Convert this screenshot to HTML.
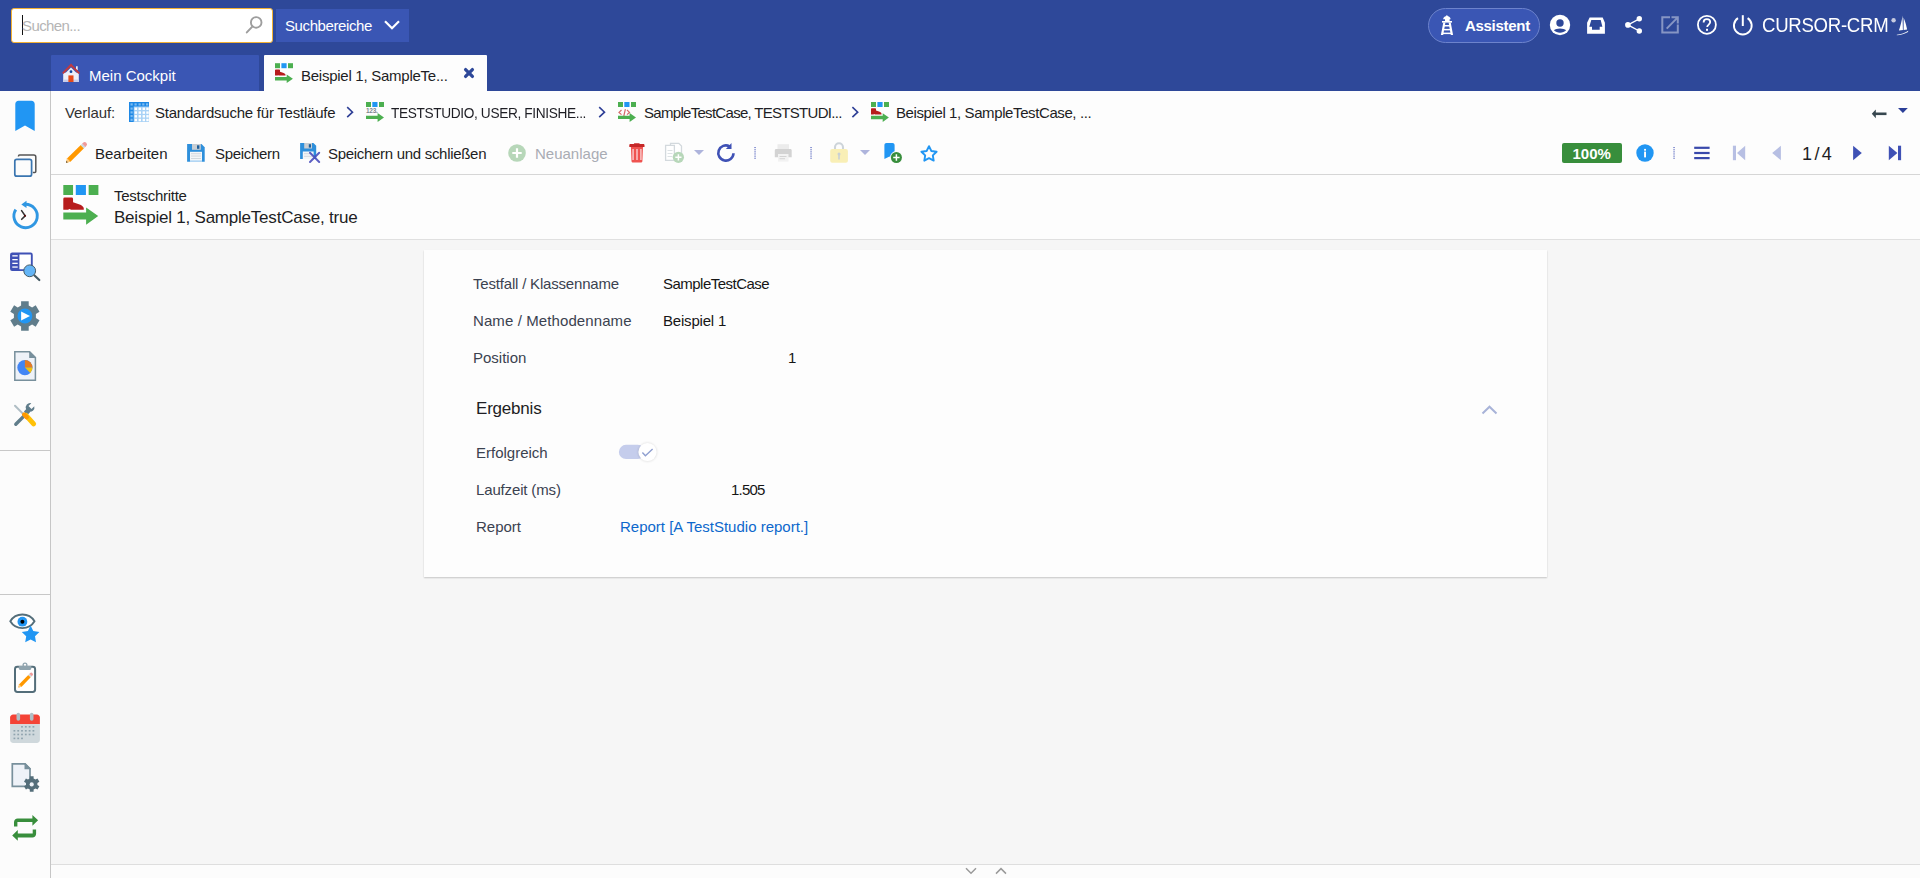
<!DOCTYPE html>
<html><head><meta charset="utf-8">
<style>
*{box-sizing:border-box;margin:0;padding:0}
html,body{width:1920px;height:878px;overflow:hidden}
body{position:relative;background:#f6f6f6;font-family:"Liberation Sans",sans-serif;color:#1e1e24}
.a{position:absolute}
.t{position:absolute;white-space:nowrap;line-height:1}
#ov{position:absolute;left:0;top:0;width:1920px;height:878px;overflow:visible}
#hdr{left:0;top:0;width:1920px;height:91px;background:#2e4899}
#search{left:11px;top:8px;width:262px;height:35px;background:#fff;border:1.5px solid #f2b134;border-radius:3px}
#sbtn{left:276px;top:9px;width:133px;height:33px;background:#3a56b4}
#tab1{left:51px;top:55px;width:208px;height:36px;background:#3a56b4;border-radius:1px 1px 0 0}
#tab2{left:264px;top:55px;width:223px;height:36px;background:#fdfdfd;border-radius:1px 1px 0 0}
#assist{left:1428px;top:8px;width:112px;height:35px;background:#3a56b4;border:1px solid #6d83cc;border-radius:18px}
#side{left:0;top:91px;width:51px;height:787px;background:#fcfcfc;border-right:1px solid #c6c6c6}
#crumb{left:51px;top:91px;width:1869px;height:84px;background:#fdfdfd;border-bottom:1px solid #d6d6d6}
#rhead{left:51px;top:175px;width:1869px;height:65px;background:#fdfdfd;border-bottom:1px solid #e0e0e0}
#card{left:424px;top:250px;width:1123px;height:327px;background:#fdfdfd;box-shadow:0 1px 1.5px rgba(0,0,0,0.2)}
#foot{left:51px;top:864px;width:1869px;height:14px;background:#fcfcfc;border-top:1px solid #dedede}
.wh{color:#fff}
.f15{font-size:15px}
.lbl{font-size:15px;color:#3b4250}
.val{font-size:15px;color:#161616}
</style></head><body>
<div id="hdr" class="a"></div>
<div id="search" class="a"></div>
<div class="a" style="left:22px;top:15px;width:1px;height:20px;background:#111"></div>
<div class="t f15" style="left:22px;top:18px;color:#b5b5b5;letter-spacing:-0.6px">Suchen...</div>
<div id="sbtn" class="a"></div>
<div class="t f15 wh" style="left:285px;top:18px;letter-spacing:-0.4px">Suchbereiche</div>
<div id="tab1" class="a"></div>
<div class="t f15 wh" style="left:89px;top:68px">Mein Cockpit</div>
<div id="tab2" class="a"></div>
<div class="t f15" style="left:301px;top:68px;letter-spacing:-0.26px">Beispiel 1, SampleTe...</div>
<div id="assist" class="a"></div>
<div class="t wh" style="left:1465px;top:18px;font-size:15px;font-weight:bold;letter-spacing:-0.3px">Assistent</div>
<div class="t wh" style="left:1762px;top:15px;font-size:20px;letter-spacing:-0.3px;transform:scaleX(0.93);transform-origin:0 0">CURSOR-CRM</div>

<div id="side" class="a"></div>
<div class="a" style="left:0;top:450px;width:50px;height:1px;background:#c8c8c8"></div>
<div class="a" style="left:0;top:594px;width:50px;height:1px;background:#c8c8c8"></div>
<div id="crumb" class="a"></div>
<div id="rhead" class="a"></div>
<div id="card" class="a"></div>
<div id="foot" class="a"></div>

<div class="t f15" style="left:65px;top:105px;color:#333;letter-spacing:-0.1px">Verlauf:</div>
<div class="t f15" style="left:155px;top:105px;letter-spacing:-0.23px">Standardsuche für Testläufe</div>
<div class="t f15" style="left:391px;top:105px;letter-spacing:-0.4px;transform:scaleX(0.912);transform-origin:0 0">TESTSTUDIO, USER, FINISHE...</div>
<div class="t f15" style="left:644px;top:105px;letter-spacing:-0.7px">SampleTestCase, TESTSTUDI...</div>
<div class="t f15" style="left:896px;top:105px;letter-spacing:-0.4px">Beispiel 1, SampleTestCase, ...</div>

<div class="t f15" style="left:95px;top:146px">Bearbeiten</div>
<div class="t f15" style="left:215px;top:146px;letter-spacing:-0.3px">Speichern</div>
<div class="t f15" style="left:328px;top:146px;letter-spacing:-0.3px">Speichern und schließen</div>
<div class="t f15" style="left:535px;top:146px;color:#a9acb4">Neuanlage</div>
<div class="t" style="left:1802px;top:145px;font-size:18px;letter-spacing:2.4px">1/4</div>

<div class="t" style="left:114px;top:188px;font-size:15px;letter-spacing:-0.27px">Testschritte</div>
<div class="t" style="left:114px;top:209px;font-size:17px;letter-spacing:-0.22px">Beispiel 1, SampleTestCase, true</div>

<div class="t lbl" style="left:473px;top:276px;letter-spacing:-0.19px">Testfall / Klassenname</div>
<div class="t val" style="left:663px;top:276px;letter-spacing:-0.52px">SampleTestCase</div>
<div class="t lbl" style="left:473px;top:313px;letter-spacing:0.1px">Name / Methodenname</div>
<div class="t val" style="left:663px;top:313px;letter-spacing:-0.19px">Beispiel 1</div>
<div class="t lbl" style="left:473px;top:350px">Position</div>
<div class="t val" style="left:788px;top:350px">1</div>
<div class="t" style="left:476px;top:400px;font-size:17px;letter-spacing:-0.2px">Ergebnis</div>
<div class="t lbl" style="left:476px;top:445px">Erfolgreich</div>
<div class="t lbl" style="left:476px;top:482px;letter-spacing:-0.15px">Laufzeit (ms)</div>
<div class="t val" style="left:731px;top:482px;letter-spacing:-0.78px">1.505</div>
<div class="t lbl" style="left:476px;top:519px">Report</div>
<div class="t f15" style="left:620px;top:519px;color:#0d68cc">Report [A TestStudio report.]</div>

<svg id="ov" width="1920" height="878" viewBox="0 0 1920 878">
<defs>
 <g id="ts">
  <rect x="0" y="0" width="5" height="5" fill="#4caf50"/>
  <rect x="6.4" y="0" width="5.2" height="5" fill="#2196f3"/>
  <rect x="13" y="0" width="5" height="5" fill="#4caf50"/>
  <path d="M0.7 6.3H4.3Q5 6.3 5 7V8.6L8 9.6C9.6 10.1 10.5 10.9 10.5 11.8V12.4H3.9Q3.2 11.6 2.5 12.4H0V7Q0 6.3 0.7 6.3Z" fill="#b71c1c"/>
  <path d="M0 13.7H11.7V11.2L17.9 15.5L11.7 19.9V17.3H0Z" fill="#4caf50"/>
 </g>
<filter id="blur" x="-50%" y="-50%" width="200%" height="200%"><feGaussianBlur stdDeviation="1"/></filter>
</defs>
<!-- search icon -->
<circle cx="256.2" cy="22.4" r="5.3" fill="none" stroke="#9e9e9e" stroke-width="1.9"/>
<path d="M252.3 26.6L246.8 32.4" stroke="#9e9e9e" stroke-width="2" stroke-linecap="round"/>
<!-- suchbereiche chevron -->
<path d="M385 21.2l7 7 7-7" fill="none" stroke="#fff" stroke-width="2.2"/>
<!-- house -->
<path d="M63.2 72.7h15.6V82H63.2z" fill="#eceff8"/>
<path d="M76 66.3h1.7v3.8H76z" fill="#eceff8"/>
<path d="M62.8 73.4L71 65l8.2 8.4" fill="none" stroke="#bf3a40" stroke-width="2"/>
<path d="M65 73.5L71 67.4l6 6.1V82H65z" fill="#eceff8"/>
<rect x="63.2" y="79.6" width="15.6" height="2.4" fill="#c9cdea"/>
<circle cx="71" cy="71.7" r="1.4" fill="#0d47a1"/>
<rect x="68.4" y="75.4" width="5.1" height="6.6" fill="#e64a19"/>
<!-- tab test icon -->
<use href="#ts" transform="translate(275,63.2)"/>
<!-- close x -->
<path d="M465.6 69.6l6.8 6.8M472.4 69.6l-6.8 6.8" stroke="#2e4899" stroke-width="3.3" stroke-linecap="round"/>

<!-- HEADER RIGHT -->
<!-- lighthouse -->
<g fill="#fff">
 <path d="M1443.2 19.2c0-1.6 1.4-2.6 2.6-2.9l1.1-1.3 1.1 1.3c1.2 0.3 2.6 1.3 2.6 2.9z"/>
 <rect x="1445" y="19" width="4.6" height="2.4"/>
 <rect x="1442" y="21" width="10" height="1.6"/>
 <path d="M1443.3 22.4h2.1l-2.2 12.6h-2.3z"/>
 <path d="M1448.6 22.4h2.1l2.4 12.6h-2.3z"/>
 <rect x="1444" y="25" width="6" height="1.5"/>
 <rect x="1443.5" y="28.9" width="7" height="1.5"/>
 <rect x="1443" y="32.6" width="8" height="1.5"/>
</g>
<!-- user -->
<circle cx="1560" cy="25" r="10.2" fill="#fff"/>
<circle cx="1560" cy="23" r="3.7" fill="#2e4899"/>
<path d="M1553.9 30.3c1.3-1.2 3.5-1.9 6.1-1.9s4.8 0.7 6.1 1.9c-1.5 1.6-3.7 2.5-6.1 2.5s-4.6-0.9-6.1-2.5z" fill="#2e4899"/>
<!-- inbox -->
<path d="M1589.6 17.4h13.1l2.2 5.4v11h-17.8v-11z" fill="#fff"/>
<path d="M1591.3 20.1h9.4l1.7 6.6h-2.7v3h-7.7v-3h-2.7z" fill="#2e4899"/>
<!-- share -->
<g fill="#fff">
 <circle cx="1639.3" cy="18.8" r="2.7"/>
 <circle cx="1627.9" cy="24.9" r="2.8"/>
 <circle cx="1639.3" cy="31" r="2.7"/>
</g>
<path d="M1639.3 18.8L1627.9 24.9L1639.3 31" fill="none" stroke="#fff" stroke-width="1.4"/>
<!-- external link (disabled) -->
<g opacity="0.42" fill="none" stroke="#fff" stroke-width="2">
 <path d="M1670 17.3h-7.7v15.2h15.5v-8"/>
 <path d="M1666.7 28.6L1677.5 17.6M1671.5 17.3h6.3v6.3"/>
</g>
<!-- help -->
<circle cx="1706.9" cy="24.8" r="9" fill="none" stroke="#fff" stroke-width="1.8"/>
<path d="M1703.6 22.4c0-2 1.5-3.3 3.3-3.3s3.3 1.2 3.3 3c0 2.4-3 2.6-3 5" fill="none" stroke="#fff" stroke-width="1.8"/>
<rect x="1706" y="28.8" width="2" height="2" fill="#fff"/>
<!-- power -->
<path d="M1738 18.1a8.9 8.9 0 1 0 9.6 0" fill="none" stroke="#fff" stroke-width="1.9"/>
<path d="M1742.8 15.2v10.8" stroke="#fff" stroke-width="2"/>
<!-- BREADCRUMB -->
<!-- grid icon -->
<rect x="129" y="102" width="20" height="20" fill="#a9d2f6"/>
<g fill="#fff"><rect x="134.6" y="107.6" width="2.4" height="2.4"/><rect x="138.6" y="107.6" width="2.4" height="2.4"/><rect x="142.6" y="107.6" width="2.4" height="2.4"/><rect x="146.3" y="107.6" width="2.4" height="2.4"/><rect x="134.6" y="111.4" width="2.4" height="2.4"/><rect x="138.6" y="111.4" width="2.4" height="2.4"/><rect x="142.6" y="111.4" width="2.4" height="2.4"/><rect x="146.3" y="111.4" width="2.4" height="2.4"/><rect x="134.6" y="115.1" width="2.4" height="2.4"/><rect x="138.6" y="115.1" width="2.4" height="2.4"/><rect x="142.6" y="115.1" width="2.4" height="2.4"/><rect x="146.3" y="115.1" width="2.4" height="2.4"/><rect x="134.6" y="118.8" width="2.4" height="2.4"/><rect x="138.6" y="118.8" width="2.4" height="2.4"/><rect x="142.6" y="118.8" width="2.4" height="2.4"/><rect x="146.3" y="118.8" width="2.4" height="2.4"/></g>
<path d="M129 102h20v4.5h-15.3v15.5H129z" fill="#1e88e5"/>
<g fill="#7dbcf2">
 <rect x="130.5" y="103.3" width="2.2" height="2.2"/><rect x="134.5" y="103.3" width="2.2" height="2.2"/><rect x="138.5" y="103.3" width="2.2" height="2.2"/><rect x="142.2" y="103.3" width="2.2" height="2.2"/><rect x="146" y="103.3" width="2.2" height="2.2"/>
 <rect x="130.5" y="107.5" width="2.2" height="2.2"/><rect x="130.5" y="111.3" width="2.2" height="2.2"/><rect x="130.5" y="115" width="2.2" height="2.2"/><rect x="130.5" y="118.7" width="2.2" height="2.2"/>
</g>
<!-- chevrons -->
<g fill="none" stroke="#2e3f96" stroke-width="1.6">
 <path d="M347.2 107.2l5.3 5-5.3 5"/>
 <path d="M599.2 107.2l5.3 5-5.3 5"/>
 <path d="M852.4 107.2l5.3 5-5.3 5"/>
</g>
<!-- test run icon 123 -->
<g transform="translate(366,102)">
 <rect x="0" y="0" width="5" height="5" fill="#4caf50"/>
 <rect x="6.3" y="0" width="5.2" height="5" fill="#2196f3"/>
 <rect x="13" y="0" width="5" height="5" fill="#4caf50"/>
 <text x="0" y="11.2" font-family="Liberation Sans" font-size="6.5" font-weight="bold" fill="#7d8790" letter-spacing="-0.3">123.</text>
 <path d="M0 13.8h11.6v-2.9l6.4 4.5-6.4 4.5v-2.9H0z" fill="#4caf50"/>
</g>
<!-- code icon -->
<g transform="translate(618,102)">
 <rect x="0" y="0" width="5" height="5" fill="#4caf50"/>
 <rect x="6.3" y="0" width="5.2" height="5" fill="#2196f3"/>
 <rect x="13" y="0" width="5" height="5" fill="#4caf50"/>
 <path d="M3.5 8l-2.5 2.4 2.5 2.2M9 8l2.5 2.4-2.5 2.2M7.4 7.2l-1.6 6.8" fill="none" stroke="#d66a6a" stroke-width="1.2"/>
 <path d="M0 13.8h11.6v-2.9l6.4 4.5-6.4 4.5v-2.9H0z" fill="#4caf50"/>
</g>
<use href="#ts" transform="translate(871,102)"/>
<!-- back arrow + caret -->
<path d="M1886.5 113.8h-12" stroke="#37474f" stroke-width="2.6"/>
<path d="M1871.8 113.8l4-4.4v8.8z" fill="#37474f"/>
<path d="M1898 108h9.8l-4.9 5z" fill="#2b3f98"/>

<!-- TOOLBAR -->
<!-- pencil -->
<g transform="translate(66,162.8) rotate(-44.6)">
 <path d="M4 -2.3H23V2.3H4L0 0z" fill="#ff9800"/>
 <path d="M4 -2.3V2.3L0 0z" fill="#ffcc80"/>
 <path d="M1.6 -0.9V0.9L0 0z" fill="#333"/>
 <rect x="22.8" y="-2.3" width="2.4" height="4.6" fill="#cfd8dc"/>
 <path d="M25 -2.3h1.2a2.3 2.3 0 0 1 0 4.6H25z" fill="#ef9a9a"/>
</g>
<!-- floppy -->
<path d="M187.1 144h14.4l3.2 3.2v14.5h-17.6z" fill="#2e8fdb"/>
<rect x="192" y="144" width="8.8" height="5.8" fill="#c9ced3"/>
<rect x="197" y="145.3" width="2.4" height="3.5" fill="#1f5f9a"/>
<rect x="190" y="151.8" width="12" height="9.9" fill="#f4f6f8"/>
<rect x="191" y="153.3" width="10" height="0.9" fill="#cfd5da"/>
<rect x="191" y="155.6" width="10" height="0.9" fill="#cfd5da"/>
<rect x="191" y="158" width="10" height="0.9" fill="#cfd5da"/>
<rect x="190" y="160.4" width="12" height="1.3" fill="#a9d2f5"/>
<!-- floppy x -->
<path d="M300.1 143h13.3l2.8 2.8v13.2h-16.1z" fill="#2e8fdb"/>
<rect x="304.2" y="143" width="7.8" height="5.5" fill="#c9ced3"/>
<rect x="308.8" y="144.2" width="2.2" height="3.4" fill="#1f5f9a"/>
<rect x="302.8" y="151.5" width="10.8" height="7.5" fill="#f4f6f8"/>
<rect x="304" y="153.3" width="8" height="0.9" fill="#cfd5da"/>
<rect x="304" y="155.8" width="8" height="0.9" fill="#cfd5da"/>
<path d="M310 152.8l9.2 9.2M319.2 152.8l-9.2 9.2" stroke="#4b4fbd" stroke-width="2" stroke-linecap="round" opacity="0.9"/>
<!-- neuanlage -->
<circle cx="517" cy="153" r="8.8" fill="#b7d7b9"/>
<path d="M517 148.3v9.4M512.3 153h9.4" stroke="#fff" stroke-width="2.2"/>
<!-- trash -->
<path d="M630.9 146.7h12.1l-0.6 14.2c0 1-0.8 1.7-1.8 1.7h-7.3c-1 0-1.8-0.7-1.8-1.7z" fill="#ef5350"/>
<path d="M629.3 145.3c0-0.7 0.5-1.2 1.2-1.2h3.3l0.5-0.9h5l0.5 0.9h3.5c0.7 0 1.2 0.5 1.2 1.2v1.6h-15.2z" fill="#c62828"/>
<g fill="#f8b4b4"><rect x="632.2" y="149" width="1.8" height="11"/><rect x="636.1" y="149" width="1.8" height="11"/><rect x="640" y="149" width="1.8" height="11"/></g>
<!-- copy disabled -->
<path d="M670.5 143.3h8.3l2.7 2.7v10h-11z" fill="#fff" stroke="#d3d9dd" stroke-width="1.3"/>
<path d="M665.6 145.4h8.8v15h-8.8z" fill="#fff" stroke="#d3d9dd" stroke-width="1.3"/>
<g fill="#dde2e5"><rect x="667.5" y="150" width="5" height="1"/><rect x="667.5" y="153" width="5" height="1"/><rect x="667.5" y="156" width="5" height="1"/></g>
<circle cx="678.4" cy="157.3" r="5.6" fill="#b7d7b9"/>
<path d="M678.4 154.2v6.2M675.3 157.3h6.2" stroke="#fff" stroke-width="1.5"/>
<path d="M694 150h10l-5 5z" fill="#aeb4dc"/>
<!-- refresh -->
<path d="M733.5 153.3a7.6 7.6 0 1 1-4-7" fill="none" stroke="#3f51b5" stroke-width="2.6"/>
<path d="M731.5 143.1v5.8h-5.6z" fill="#3f51b5"/>
<!-- separators -->
<g fill="#5c6bc0">
 <rect x="754.4" y="147" width="1.3" height="1.1"/><rect x="754.4" y="149.2" width="1.3" height="1.1"/><rect x="754.4" y="151.3" width="1.3" height="1.1"/><rect x="754.4" y="153.4" width="1.3" height="1.1"/><rect x="754.4" y="155.6" width="1.3" height="1.1"/><rect x="754.4" y="157.7" width="1.3" height="1.1"/>
 <rect x="810.4" y="147" width="1.3" height="1.1"/><rect x="810.4" y="149.2" width="1.3" height="1.1"/><rect x="810.4" y="151.3" width="1.3" height="1.1"/><rect x="810.4" y="153.4" width="1.3" height="1.1"/><rect x="810.4" y="155.6" width="1.3" height="1.1"/><rect x="810.4" y="157.7" width="1.3" height="1.1"/>
 <rect x="1673.4" y="147" width="1.3" height="1.1"/><rect x="1673.4" y="149.2" width="1.3" height="1.1"/><rect x="1673.4" y="151.3" width="1.3" height="1.1"/><rect x="1673.4" y="153.4" width="1.3" height="1.1"/><rect x="1673.4" y="155.6" width="1.3" height="1.1"/><rect x="1673.4" y="157.7" width="1.3" height="1.1"/>
</g>
<!-- print disabled -->
<rect x="777.5" y="144.2" width="11.5" height="5" fill="#ececec"/>
<path d="M776.2 149h14.1c0.8 0 1.4 0.6 1.4 1.4v6.8h-16.9v-6.8c0-0.8 0.6-1.4 1.4-1.4z" fill="#d3d3d3"/>
<rect x="778" y="154" width="10.5" height="7.7" fill="#f2f2f2"/>
<rect x="779.5" y="156" width="7" height="0.9" fill="#d0d0d0"/>
<rect x="779.5" y="158.3" width="5.5" height="0.9" fill="#d0d0d0"/>
<!-- lock disabled -->
<path d="M835 149v-1.8a4 4 0 0 1 8 0v1.8" fill="none" stroke="#cdd4d9" stroke-width="2.1"/>
<rect x="830.2" y="148.9" width="17.7" height="13.9" rx="2" fill="#f9efb6"/>
<circle cx="839" cy="154" r="1.5" fill="#c9d0d5"/>
<rect x="838.2" y="154" width="1.6" height="5.5" fill="#c9d0d5"/>
<path d="M860 150h10l-5 5z" fill="#aeb4dc"/>
<!-- bookmark add -->
<path d="M884.4 145.2c0-1.2 0.9-2.1 2.1-2.1h6c1.2 0 2.1 0.9 2.1 2.1v13.9l-5.1-2.6-5.1 2.6z" fill="#2196f3"/>
<circle cx="896.4" cy="157.5" r="6.4" fill="#fcfcfc"/>
<circle cx="896.4" cy="157.5" r="5.5" fill="#388e3c"/>
<path d="M896.4 154.3v6.4M893.2 157.5h6.4" stroke="#fff" stroke-width="1.5"/>
<!-- star outline -->
<path d="M929.00 146.20 L931.35 150.96 L936.61 151.73 L932.80 155.44 L933.70 160.67 L929.00 158.20 L924.30 160.67 L925.20 155.44 L921.39 151.73 L926.65 150.96Z" fill="none" stroke="#2196f3" stroke-width="1.9" stroke-linejoin="round"/>
<!-- 100% badge -->
<rect x="1562" y="143" width="60" height="20" rx="2" fill="#388e3c"/>
<text x="1572.5" y="159.3" font-family="Liberation Sans" font-size="15" font-weight="bold" fill="#fff">100%</text>
<!-- info -->
<circle cx="1645" cy="153" r="8.7" fill="#2196f3"/>
<rect x="1644.1" y="148.9" width="1.9" height="1.8" fill="#fff"/>
<rect x="1644.1" y="151.6" width="1.9" height="5.8" fill="#fff"/>
<!-- hamburger -->
<g fill="#3949ab"><rect x="1694.2" y="146.7" width="15.4" height="2.2"/><rect x="1694.2" y="151.9" width="15.4" height="2.2"/><rect x="1694.2" y="157" width="15.4" height="2.2"/></g>
<!-- nav -->
<g fill="#b7bfe3">
 <rect x="1732.9" y="145.7" width="3.1" height="14.5"/>
 <path d="M1745.2 145.7v14.5l-8.2-7.25z"/>
 <path d="M1780.9 145.7v14.5l-8.7-7.25z"/>
</g>
<g fill="#3f51b5">
 <path d="M1853.1 145.7v14.5l8.7-7.25z"/>
 <path d="M1888.8 145.7v14.5l8.6-7.25z"/>
 <rect x="1898" y="145.7" width="3.1" height="14.5"/>
</g>

<!-- RECORD HEADER ICON -->
<use href="#ts" transform="translate(63.3,185) scale(1.95,2)"/>

<!-- CARD -->
<path d="M1482.5 413.5l7-6.8 7 6.8" fill="none" stroke="#a8b3d8" stroke-width="2"/>
<rect x="618.9" y="444.8" width="26" height="14.2" rx="7.1" fill="#c5cdec"/>
<circle cx="647.5" cy="452.2" r="9.6" fill="#000" opacity="0.1" filter="url(#blur)"/>
<circle cx="647.5" cy="452" r="9.1" fill="#fff"/>
<path d="M642.4 452.5l3 3.3 7.2-6.8" fill="none" stroke="#8f9fd0" stroke-width="1.4"/>

<!-- FOOTER chevrons -->
<path d="M966 868.3l5 5 5-5" fill="none" stroke="#9a9a9a" stroke-width="1.5"/>
<path d="M996 873.6l5-5 5 5" fill="none" stroke="#9a9a9a" stroke-width="1.5"/>

<!-- SIDEBAR -->
<!-- bookmark -->
<path d="M15.3 104c0-1.8 1.4-3.2 3.2-3.2h13c1.8 0 3.2 1.4 3.2 3.2v26.9l-9.7-5.3-9.7 5.3z" fill="#2196f3"/>
<!-- windows -->
<path d="M18.5 156.5v-0.4c0-0.6 0.5-1 1-1h14.3c1.1 0 2 0.9 2 2v14.3c0 0.6-0.4 1-1 1h-2" fill="none" stroke="#555" stroke-width="1.5"/>
<rect x="14.8" y="159.3" width="16.8" height="16.9" rx="2" fill="#fcfcfc" stroke="#3a75b0" stroke-width="1.7"/>
<!-- clock history -->
<path d="M15.8 209.6A11.7 11.7 0 1 0 25.3 204.3" fill="none" stroke="#3097e2" stroke-width="2.9"/>
<path d="M21.3 204.4l5.2-3.7v7.4z" fill="#3097e2"/>
<path d="M21.6 210.6l3.6 5.2-3.5 3.5" fill="none" stroke="#333" stroke-width="1.6" stroke-linecap="round"/>
<circle cx="25" cy="215.8" r="1" fill="#5a0a0a"/>
<!-- search list -->
<rect x="11" y="253.5" width="20.8" height="16.6" rx="1.2" fill="#fff" stroke="#3f51b5" stroke-width="1.9"/>
<rect x="11" y="253.5" width="8.4" height="16.6" fill="#3f51b5"/>
<g fill="#fff"><rect x="12.3" y="255.2" width="5.4" height="1.3"/><rect x="12.3" y="259" width="5.4" height="1.3"/><rect x="12.3" y="262.7" width="5.4" height="1.3"/><rect x="12.3" y="266.4" width="5.4" height="1.3"/></g>
<path d="M34.5 275.5l4.8 4.5" stroke="#455a64" stroke-width="2.2" stroke-linecap="round"/>
<circle cx="29.7" cy="270.8" r="5.9" fill="#64b5f6" stroke="#455a64" stroke-width="1"/>
<!-- gear play -->
<g transform="translate(24.9,316)">
 <path d="M-3.8-14.8h7.6v4.2l3.4 2 3.6-2.2 3.8 6.6-3.6 2.1v4.2l3.6 2.1-3.8 6.6-3.6-2.2-3.4 2v4.2h-7.6v-4.2l-3.4-2-3.6 2.2-3.8-6.6 3.6-2.1v-4.2l-3.6-2.1 3.8-6.6 3.6 2.2 3.4-2z" fill="#607d8b"/>
 <circle r="7.4" fill="#2196f3"/>
 <path d="M-3.8-4.5v9.1l8.9-4.55z" fill="#fff"/>
</g>
<!-- report doc -->
<path d="M14.8 351.8h14.5l6.1 6.1v22.3h-20.6z" fill="#eef2f8" stroke="#78909c" stroke-width="1.5"/>
<path d="M29.2 351h0.6l6.3 6.3v0.6h-6.9z" fill="#78909c"/>
<circle cx="24.9" cy="367.6" r="7.6" fill="#4285f4"/>
<path d="M24.9 367.6v-7.6a7.6 7.6 0 0 1 7.6 7.6z" fill="#e67c22"/>
<path d="M24.9 367.6h7.6a7.6 7.6 0 0 1-2.2 5.4z" fill="#f4c20d"/>
<!-- tools -->
<path d="M15 405.8l9.6 9.6" stroke="#b0bec5" stroke-width="2" stroke-linecap="round"/>
<path d="M28.4 411.6l-12.6 12.6" stroke="#607d8b" stroke-width="3.4" stroke-linecap="round"/>
<path d="M34.3 406.2a4.4 4.4 0 0 1-6 5.2l-2.2 2.2-2.2-2.2 2.2-2.2a4.4 4.4 0 0 1 5.2-6l-2.8 2.8 3 3z" fill="#607d8b"/>
<path d="M26 415.3l7.6 8.6" stroke="#ffc107" stroke-width="5" stroke-linecap="round"/>
<path d="M24.2 414.6l2.5 2.6" stroke="#ff9800" stroke-width="4.4" stroke-linecap="round"/>
<!-- eye star -->
<path d="M10.3 621.3c2.5-4.2 6.5-6.8 12.1-6.8s9.6 2.6 12.1 6.8c-2.5 4.2-6.5 6.8-12.1 6.8s-9.6-2.6-12.1-6.8z" fill="#fff" stroke="#546e7a" stroke-width="1.9"/>
<circle cx="22.4" cy="621.7" r="4.9" fill="#2196f3"/>
<circle cx="22.4" cy="621.7" r="2" fill="#000"/>
<path d="M30.6 625.6l2.7 5.5 6.1 0.9-4.4 4.2 1 6-5.4-2.8-5.4 2.8 1-6-4.4-4.2 6.1-0.9z" fill="#2196f3"/>
<!-- clipboard -->
<rect x="15" y="666.8" width="20.1" height="25.1" rx="2.4" fill="#fff" stroke="#546e7a" stroke-width="2"/>
<path d="M18.8 666h12.5v2.2c0 1-0.8 1.8-1.8 1.8h-8.9c-1 0-1.8-0.8-1.8-1.8z" fill="#90a4ae"/>
<circle cx="25" cy="665" r="1.9" fill="none" stroke="#90a4ae" stroke-width="1.3"/>
<g transform="translate(18.3,687.6) rotate(-45.6)">
 <path d="M3 -1.7H16V1.7H3L0 0z" fill="#ff9800"/>
 <path d="M3 -1.7V1.7L0 0z" fill="#ffcc80"/>
 <rect x="16" y="-1.7" width="1.6" height="3.4" fill="#cfd8dc"/>
 <path d="M17.6 -1.7h0.9a1.7 1.7 0 0 1 0 3.4h-0.9z" fill="#ef9a9a"/>
</g>
<!-- calendar -->
<path d="M10.1 717.6c0-1.6 1.4-3 3-3h23.8c1.6 0 3 1.4 3 3v6.6H10.1z" fill="#f44336"/>
<path d="M10.1 724.2h29.8v15.7c0 1.6-1.4 3-3 3H13.1c-1.6 0-3-1.4-3-3z" fill="#cfd8dc"/>
<rect x="16.5" y="712.8" width="3.6" height="8" rx="1.8" fill="#b0bec5"/>
<rect x="29.9" y="712.8" width="3.6" height="8" rx="1.8" fill="#b0bec5"/>
<g fill="#90a4ae">
 <rect x="21.1" y="726" width="1.8" height="1.6"/><rect x="24.9" y="726" width="1.8" height="1.6"/><rect x="28.7" y="726" width="1.8" height="1.6"/><rect x="32.5" y="726" width="1.8" height="1.6"/>
 <rect x="13.5" y="730" width="1.8" height="1.6"/><rect x="17.3" y="730" width="1.8" height="1.6"/><rect x="21.1" y="730" width="1.8" height="1.6"/><rect x="24.9" y="730" width="1.8" height="1.6"/><rect x="28.7" y="730" width="1.8" height="1.6"/><rect x="32.5" y="730" width="1.8" height="1.6"/>
 <rect x="13.5" y="733.7" width="1.8" height="1.6"/><rect x="17.3" y="733.7" width="1.8" height="1.6"/><rect x="21.1" y="733.7" width="1.8" height="1.6"/><rect x="24.9" y="733.7" width="1.8" height="1.6"/><rect x="28.7" y="733.7" width="1.8" height="1.6"/><rect x="32.5" y="733.7" width="1.8" height="1.6"/>
 <rect x="13.5" y="737.6" width="1.8" height="1.6"/><rect x="17.3" y="737.6" width="1.8" height="1.6"/><rect x="21.1" y="737.6" width="1.8" height="1.6"/>
</g>
<!-- doc gear -->
<path d="M12.3 763.8h12.7l5 5v17.6H12.3z" fill="#eef2f8" stroke="#78909c" stroke-width="1.7"/>
<path d="M24.5 763h0.8l5.5 5.5v0.8h-6.3z" fill="#78909c"/>
<g transform="translate(31.7,784.4)">
 <path d="M-1.9-8.2h3.8v2.3l1.9 1.1 2-1.2 1.9 3.3-2 1.2v2.2l2 1.2-1.9 3.3-2-1.2-1.9 1.1v2.3h-3.8v-2.3l-1.9-1.1-2 1.2-1.9-3.3 2-1.2v-2.2l-2-1.2 1.9-3.3 2 1.2 1.9-1.1z" fill="#546e7a"/>
 <circle r="2.1" fill="#eef2f8"/>
</g>
<!-- repeat -->
<g fill="#388e3c">
 <path d="M14 826.5v-4.3c0-2.1 1.6-3.8 3.7-3.8h14.7v-3.4l5.7 5.2-5.7 5.6v-3.7H17.4v4.4z"/>
 <path d="M36.1 829.4v4.3c0 2.1-1.6 3.8-3.7 3.8H17.8v3.3l-5.6-5.4 5.6-5.4v3.5h14.9v-4.1z"/>
</g>

<!-- ® and sailboat -->
<circle cx="1893.6" cy="20.3" r="2.2" fill="#c7cbe0"/>
<g fill="#fff">
 <path d="M1902.5 15.4l0.4 14.6-4 0.4c1.5-4.8 3-9.5 3.6-15z"/>
 <path d="M1903.6 17.5c1.6 4 2.8 8.3 3.5 12l-3.5 0.4z"/>
 <path d="M1896.8 34.8c4-0.5 8-1.8 11.5-4l-0.3 1.2c-3.3 2-7.3 3-11.2 3.2z"/>
</g>
</svg>
</body></html>
